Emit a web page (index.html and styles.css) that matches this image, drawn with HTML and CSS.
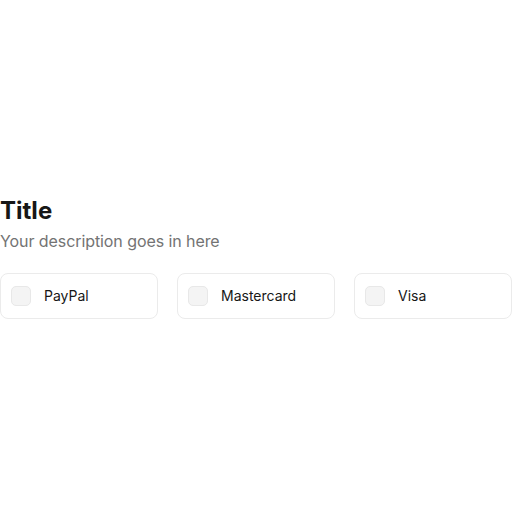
FILE: index.html
```html
<!DOCTYPE html>
<html>
<head>
<meta charset="utf-8">
<link rel="stylesheet" href="styles.css">
</head>
<body>
<main class="page">
  <section class="group">
    <h1 class="title">Title</h1>
    <p class="desc">Your description goes in here</p>
    <div class="options">
      <label class="card"><span class="box"></span><span class="label">PayPal</span></label>
      <label class="card"><span class="box"></span><span class="label">Mastercard</span></label>
      <label class="card"><span class="box"></span><span class="label">Visa</span></label>
    </div>
  </section>
</main>
</body>
</html>
```
FILE: styles.css
```css
* { box-sizing: border-box; }
html, body { margin: 0; padding: 0; }
body {
  font-family: Inter, "Noto Sans", sans-serif;
  background: #fff;
  color: #171717;
}
.page {
  height: 512px;
  display: flex;
  flex-direction: column;
  justify-content: center;
  padding-top: 4px;
}
.group { width: 100%; }
.title {
  margin: 0;
  font-size: 24px;
  line-height: 28px;
  font-weight: 700;
  letter-spacing: 0;
  color: #171717;
}
.desc {
  margin: 4px 0 0;
  font-size: 16px;
  line-height: 24px;
  letter-spacing: -0.08px;
  color: #737373;
}
.options {
  margin-top: 20px;
  display: grid;
  grid-template-columns: repeat(3, 1fr);
  gap: 19px;
}
.card {
  display: flex;
  align-items: center;
  gap: 13px;
  height: 46px;
  padding: 0 10px;
  border: 1px solid #ebebeb;
  border-radius: 8px;
  background: #fff;
}
.box {
  width: 20px;
  height: 20px;
  border-radius: 5px;
  background: #f4f4f4;
  border: 1px solid #e8e8e8;
  flex-shrink: 0;
}
.label {
  font-size: 14px;
  line-height: 20px;
  color: #171717;
}
```
